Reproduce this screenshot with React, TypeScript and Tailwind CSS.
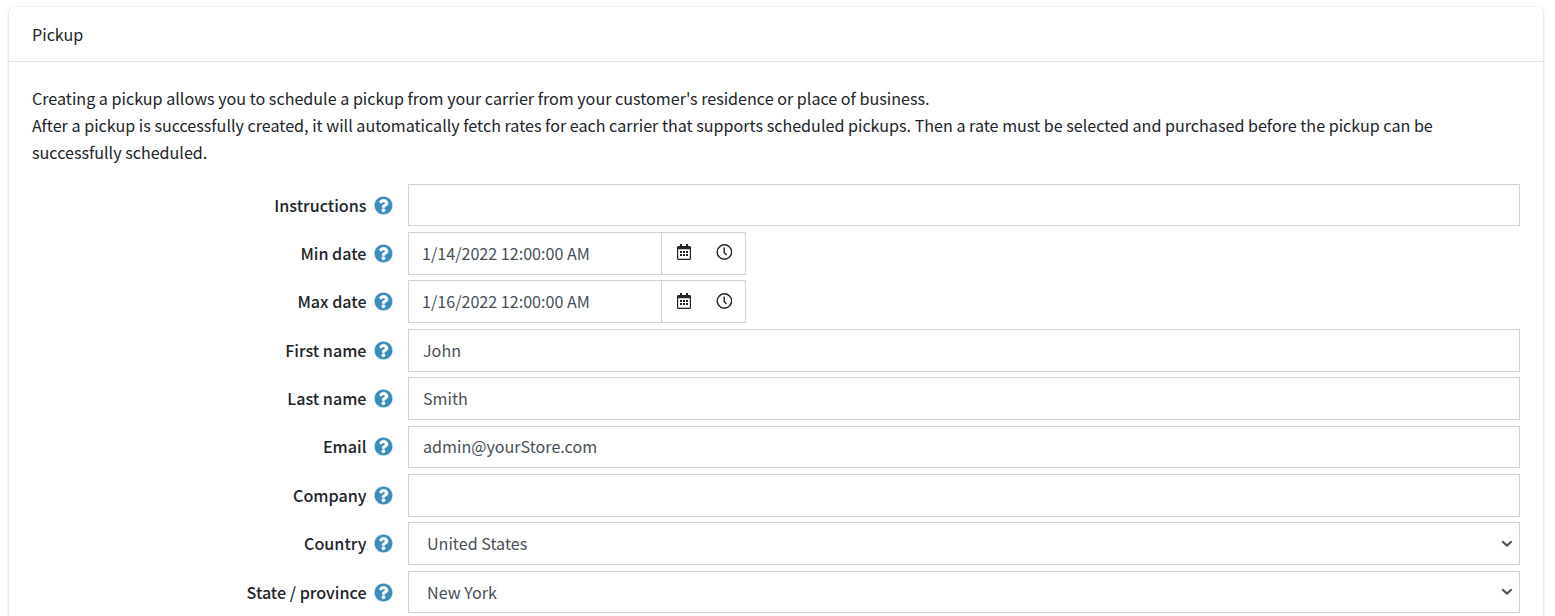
import React from 'react';
import { FaQuestionCircle } from 'react-icons/fa';

type Kind = 'text' | 'date' | 'select';
const fields: { label: string; value: string; kind: Kind }[] = [
  { label: 'Instructions', value: '', kind: 'text' },
  { label: 'Min date', value: '1/14/2022 12:00:00 AM', kind: 'date' },
  { label: 'Max date', value: '1/16/2022 12:00:00 AM', kind: 'date' },
  { label: 'First name', value: 'John', kind: 'text' },
  { label: 'Last name', value: 'Smith', kind: 'text' },
  { label: 'Email', value: 'admin@yourStore.com', kind: 'text' },
  { label: 'Company', value: '', kind: 'text' },
  { label: 'Country', value: 'United States', kind: 'select' },
  { label: 'State / province', value: 'New York', kind: 'select' },
];

function CalendarIcon() {
  return (
    <svg width="14" height="16" viewBox="0 0 14 16" fill="#212529">
      <path fillRule="evenodd" d="M3 0h2v2h4V0h2v2h2l1 1v12l-1 1H1l-1-1V3l1-1h2zM1.2 5.2v9.6h11.6V5.2z" />
      <path d="M3 7h2v2H3zM6 7h2v2H6zM9 7h2v2H9zM3 10h2v2H3zM6 10h2v2H6zM9 10h2v2H9z" />
    </svg>
  );
}

function ClockIcon() {
  return (
    <svg width="16" height="16" viewBox="0 0 16 16" fill="none" stroke="#212529" strokeWidth="1.4">
      <circle cx="8.4" cy="8" r="7.2" />
      <path d="M8.2 3.5v5l2.4 2.4" />
    </svg>
  );
}

function Control({ value, kind }: { value: string; kind: Kind }) {
  if (kind === 'date') {
    return (
      <div className="flex h-full w-[338px] border border-[#ced4da] text-[#495057]">
        <div className="flex w-[253px] items-center border-r border-[#ced4da] pl-[13px]">{value}</div>
        <div className="flex items-center pb-[2px] pl-[15px]">
          <CalendarIcon />
          <span className="w-[25px]" />
          <ClockIcon />
        </div>
      </div>
    );
  }
  return (
    <div className={`flex h-full items-center justify-between border border-[#ced4da] text-[#495057] ${kind === 'select' ? 'pl-[18px] pr-[6px]' : 'pl-[14px]'}`}>
      <span className="pt-[0.2px]">{value}</span>
      {kind === 'select' && (
        <svg width="12" height="8" viewBox="0 0 12 8" fill="none" stroke="#495057" strokeWidth="2">
          <path d="M1.2 1.2 6 5.6l4.8-4.4" />
        </svg>
      )}
    </div>
  );
}

export default function App() {
  return (
    <div className="h-[616px] overflow-hidden bg-white px-[9px] pt-[7px] pr-[12px] font-['Noto_Sans_CJK_SC','Noto_Sans',sans-serif] text-[16.11px] leading-[27px] text-[#212529]">
      <div className="h-[640px] rounded-[5px] bg-white shadow-[0_0_1px_rgba(0,0,0,0.125),0_1px_3px_rgba(0,0,0,0.2)]">
        <div className="flex h-[55px] items-center border-b border-[#dfdfdf] px-[23px]">Pickup</div>
        <div className="px-[23px] pt-[22.72px]">
          <p className="h-[99px]">
            Creating a pickup allows you to schedule a pickup from your carrier from your customer's residence or place of business.
            <br />
            After a pickup is successfully created, it will automatically fetch rates for each carrier that supports scheduled pickups. Then a rate must be selected and purchased before the pickup can be
            <br />
            successfully scheduled.
          </p>
          <div className="flex flex-col gap-[5.64px]">
            {fields.map((f) => (
              <div key={f.label} className="flex h-[42.74px]">
                <div className="flex w-[376px] shrink-0 items-center justify-end gap-[7px] pr-[15.5px] pt-[0.1px] font-medium">
                  <span>{f.label}</span>
                  <FaQuestionCircle size={19} color="#3c8dbc" stroke="#ffffff" strokeWidth={14} />
                </div>
                <div className="min-w-0 flex-1">
                  <Control value={f.value} kind={f.kind} />
                </div>
              </div>
            ))}
          </div>
        </div>
      </div>
    </div>
  );
}
